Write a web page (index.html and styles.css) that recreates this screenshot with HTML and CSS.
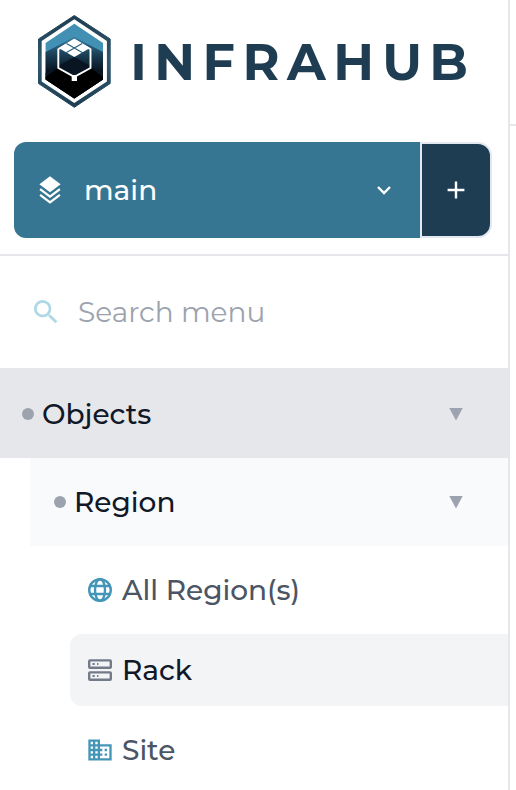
FILE: index.html
```html
<!DOCTYPE html>
<html lang="en">
<head>
<meta charset="utf-8">
<title>Infrahub</title>
<link rel="stylesheet" href="styles.css">
</head>
<body>
<div class="app">
  <aside class="sidebar">
    <header class="brand">
      <svg class="brand-logo" width="440" height="100" viewBox="34 12 440 100" role="img" aria-label="Infrahub">
        <defs>
          <linearGradient id="ring" x1="0" y1="0" x2="0" y2="1"><stop offset="0" stop-color="#1e3d52"/><stop offset=".5" stop-color="#2f586e"/><stop offset="1" stop-color="#1e3d52"/></linearGradient>
          <linearGradient id="sky" x1="0" y1="0" x2="0" y2="1"><stop offset="0" stop-color="#418fb2"/><stop offset="1" stop-color="#4698bb"/></linearGradient>
          <linearGradient id="fade" gradientUnits="userSpaceOnUse" x1="0" y1="39" x2="0" y2="72"><stop offset="0" stop-color="#35779a"/><stop offset=".45" stop-color="#1c4159"/><stop offset="1" stop-color="#07111d"/></linearGradient>
        </defs>
        <path fill="url(#ring)" stroke="url(#ring)" stroke-linejoin="round" d="M74.3 15.500 110.200 39V83.500L74.3 107.300 38.500 83.500V39Z"/>
        <path fill="#fff" d="M74.3 19.300 106.900 41V81.400L74.300 103.100 41.700 81.400V41Z"/>
        <path fill="url(#sky)" d="M74.300 23.800 103 43V79.500L74.300 98.600 45.600 79.500V43Z"/>
        <path fill="url(#fade)" d="M45.600 52 74.300 37 103 52V79.500L74.300 98.600 45.600 79.500Z"/>
        <path fill="#091522" d="M45.600 73 74.300 57 103 73V79.500L74.300 98.600 45.600 79.500Z"/>
        <path fill="#000" d="M45.600 79.500V77L58 68 74.300 78 91 68 103 77V79.500L74.300 98.600Z"/>
        <path fill="none" stroke="#fff" stroke-width="1.900" d="M74.300 39.800 58.300 49.300V68L74.300 76.800 90.500 68V49.300Z"/>
        <path fill="#fff" d="M74.300 38.800 90 48 74.300 57 58.700 48Z"/>
        <path fill="none" stroke="#2b617e" stroke-width="1.200" d="M66.500 43.500 83 53M82.200 43.500 65.600 53"/>
        <path fill="#fff" d="M71.700 75H77V81H71.700Z"/>
        <text class="wordmark" y="79.800" x="130.200 154.200 202.500 242.500 287 333.200 382.200 429.200">INFRAHUB</text>
      </svg>
    </header>
    <div class="branch">
      <button class="branch-select" type="button">
        <svg class="icon-layers" width="28" height="32" viewBox="0 0 28 32" fill="none">
          <path fill="#fff" d="M14 2.200 24.600 10.300 14 18.300 3.400 10.300Z"/>
          <path stroke="#fff" stroke-width="2.300" d="M4.100 15.100 14 22.600 23.900 15.100M4.100 20.900 14 28.300 23.900 20.900"/>
        </svg>
        <span class="branch-name">main</span>
        <svg width="16" height="16" viewBox="0 0 16 16" fill="none" stroke="#fff" stroke-width="2.400"><path d="M2 5 8 11.100 14 5"/></svg>
      </button>
      <button class="branch-add" type="button" aria-label="Create branch">
        <svg width="18" height="18" viewBox="0 0 18 18" stroke="#fff" stroke-width="2.400"><path d="M9 .6V17.400M.6 9H17.400"/></svg>
      </button>
    </div>
    <label class="search">
      <svg width="32" height="32" viewBox="0 0 24 24" fill="#add8e6"><path d="M9.500 3A6.500 6.500 0 0 1 16 9.500c0 1.610-.59 3.090-1.560 4.230l.27.270h.79l5 5-1.500 1.500-5-5v-.790l-.270-.270A6.500 6.500 0 1 1 9.500 3m0 2a4.500 4.500 0 1 0 0 9 4.500 4.500 0 0 0 0-9"/></svg>
      <span class="search-text">Search menu</span>
    </label>
    <nav class="menu">
      <div class="group group-root"><i class="dot"></i><span class="group-name">Objects</span><i class="caret"></i></div>
      <div class="group group-sub"><i class="dot"></i><span class="group-name">Region</span><i class="caret"></i></div>
      <ul class="items">
        <li class="item">
          <svg width="28" height="28" viewBox="0 0 28 28" fill="none" stroke="#4496b8" stroke-width="2.400"><circle cx="14" cy="14" r="10.800"/><ellipse cx="14" cy="14" rx="5" ry="10.800"/><path d="M4 10H24M4 18H24"/></svg>
          <span>All Region(s)</span>
        </li>
        <li class="item item-active">
          <svg width="28" height="28" viewBox="0 0 28 28" fill="none" stroke="#737a8a" stroke-width="2.400"><rect x="3.200" y="4.400" width="21.600" height="7.400" rx=".8"/><rect x="3.200" y="16.400" width="21.600" height="7.400" rx=".8"/><path stroke-width="2" d="M6.500 8.100h2.200M11 8.100h1.400M6.500 20.100h2.200M11 20.100h1.400"/></svg>
          <span>Rack</span>
        </li>
        <li class="item">
          <svg width="28" height="28" viewBox="0 0 24 24" fill="#4496b8"><path d="M18 15h-2v2h2m0-6h-2v2h2m2 6h-8v-2h2v-2h-2v-2h2v-2h-2V9h8M10 7H8V5h2m0 6H8V9h2m0 6H8v-2h2m0 6H8v-2h2M6 7H4V5h2m0 6H4V9h2m0 6H4v-2h2m0 6H4v-2h2m6-10V3H2v18h20V7z"/></svg>
          <span>Site</span>
        </li>
      </ul>
    </nav>
  </aside>
  <main class="content"><div class="topbar"></div></main>
</div>
</body>
</html>
```
FILE: styles.css
```css
* { box-sizing: border-box; }
body {
  margin: 0;
  background: #fff;
  color: #111827;
  font-family: Montserrat, Inter, "Liberation Sans", sans-serif;
  font-size: 28px;
  font-weight: 500;
  line-height: 36px;
}
.app { display: flex; height: 790px; overflow: hidden; }
.sidebar { width: 510px; flex: none; border-right: 2px solid #e5e7eb; }
.content { flex: 1; }
.topbar { height: 126px; border-bottom: 2px solid #e5e7eb; }
.brand { height: 142px; padding: 12px 0 0 34px; }
.brand-logo { display: block; }
.wordmark { font-size: 50.5px; font-weight: 700; fill: #1e3d52; }
.branch { display: flex; height: 114px; padding: 0 16px 16px 14px; border-bottom: 2px solid #e5e7eb; }
button { margin: 0; font: inherit; color: #fff; }
.branch-select {
  display: flex;
  align-items: center;
  width: 406px;
  padding: 0 28px 0 22px;
  border: 0;
  border-radius: 12px 0 0 12px;
  background: #367693;
}
.branch-name { flex: 1; margin-left: 20px; text-align: left; }
.branch-add {
  display: flex;
  align-items: center;
  justify-content: center;
  width: 72px;
  padding: 0;
  border: 2px solid #e2e8f0;
  border-radius: 0 14px 14px 0;
  background: #1e3d52;
}
.search { display: flex; align-items: center; height: 112px; padding-left: 30px; gap: 16px; color: #9ca3af; font-weight: 400; }
.group { display: flex; align-items: center; padding-right: 45px; }
.group-root { height: 90px; padding-top: 2px; padding-left: 22px; background: #e5e7eb; }
.group-sub { height: 88px; margin-left: 30px; padding-left: 24px; background: #f9fafc; }
.dot { width: 12px; height: 12px; border-radius: 50%; background: #9ca3af; }
.group-name { flex: 1; margin-left: 8px; }
.caret { width: 14px; height: 13px; background: #9ca3af; clip-path: polygon(0 0, 100% 0, 50% 100%); }
.items { display: flex; flex-direction: column; gap: 8px; margin: 0; padding: 8px 0 0 70px; list-style: none; }
.item { display: flex; align-items: center; height: 72px; padding-left: 16px; gap: 8px; border-radius: 12px 0 0 12px; color: #4b5563; }
.item-active { background: #f3f4f6; color: #111827; }
```
